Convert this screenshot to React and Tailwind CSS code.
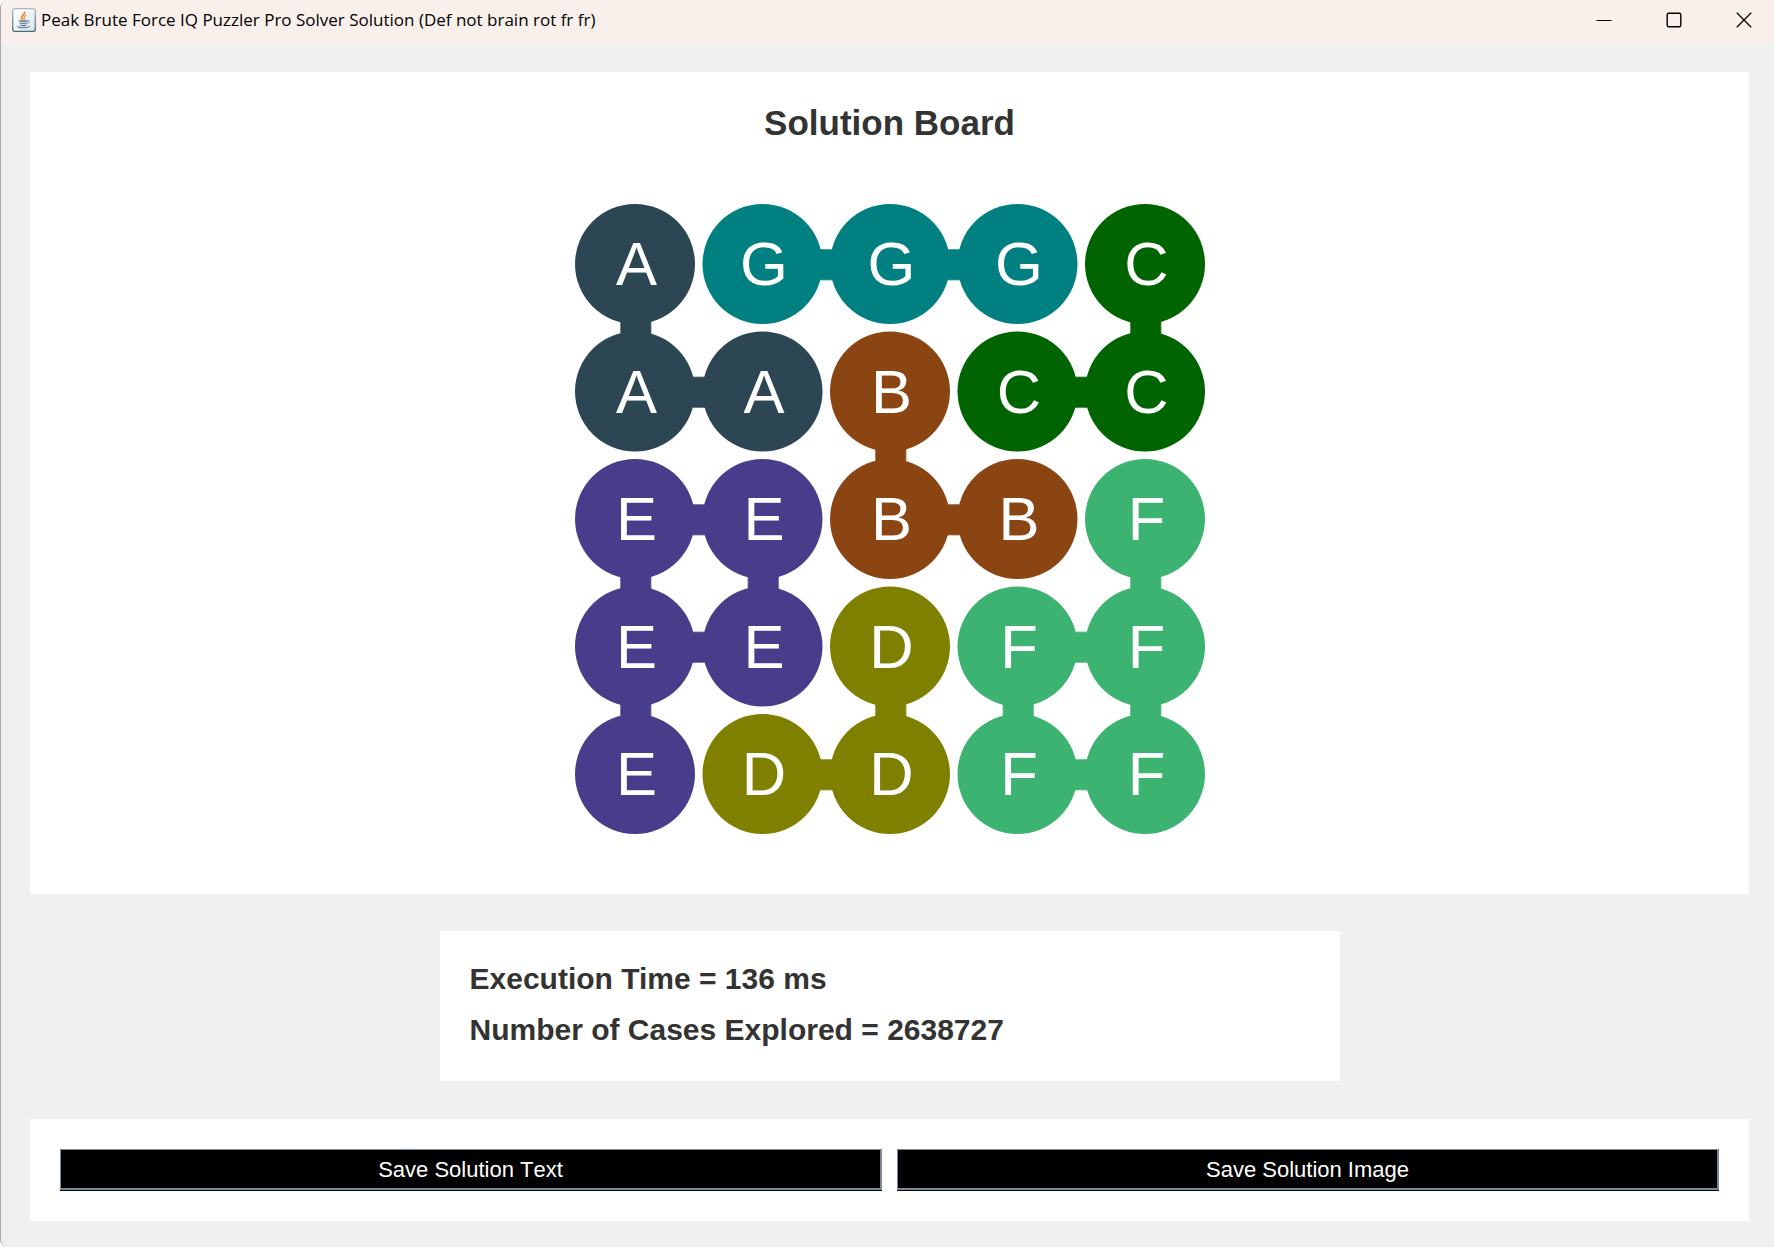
const board = ['AGGGC', 'AABCC', 'EEBBF', 'EEDFF', 'EDDFF']

const colors = {
  A: '#2d4654',
  B: '#8b4513',
  C: '#006400',
  D: '#808000',
  E: '#483d8b',
  F: '#3cb371',
  G: '#008080',
}

const CELL = 80
const STEP = 85

function Connector({ x, y, color }) {
  return (
    <rect x={x} y={y} width={20} height={20} fill={color} stroke={color} strokeOpacity={0.6} />
  )
}

function Board() {
  return (
    <svg viewBox="0 0 420 420" className="w-[630px] max-w-full" role="img" aria-label="Solution board">
      {board.map((row, r) =>
        [...row].map((piece, c) => {
          const x = c * STEP
          const y = r * STEP
          return (
            <g key={`${r}-${c}`}>
              {row[c + 1] === piece && <Connector x={x + 72} y={y + 30.5} color={colors[piece]} />}
              {board[r + 1]?.[c] === piece && <Connector x={x + 30.5} y={y + 72} color={colors[piece]} />}
              <circle cx={x + CELL / 2} cy={y + CELL / 2} r={CELL / 2} fill={colors[piece]} />
            </g>
          )
        })
      )}
      {board.map((row, r) =>
        [...row].map((piece, c) => (
          <text key={`${r}-${c}`} x={c * STEP + 41} y={r * STEP + 54} fontSize="41" fill="#fff" textAnchor="middle">
            {piece}
          </text>
        ))
      )}
    </svg>
  )
}

function JavaIcon() {
  return (
    <svg viewBox="0 0 24 24" className="w-6 h-6" aria-hidden="true">
      <defs>
        <linearGradient id="frame" x1="0" y1="0" x2="0" y2="1">
          <stop offset="0" stopColor="#a9bccb" />
          <stop offset="1" stopColor="#48667c" />
        </linearGradient>
        <linearGradient id="face" x1="0" y1="0" x2="1" y2="1">
          <stop offset="0" stopColor="#ffffff" />
          <stop offset="1" stopColor="#dde5ea" />
        </linearGradient>
      </defs>
      <rect x="0.7" y="0.7" width="22.6" height="22.6" rx="2" fill="url(#face)" stroke="url(#frame)" strokeWidth="1.3" />
      <g fill="none" strokeLinecap="round">
        <path d="M12.6 4.4c.8 2-3.4 2.8-3.1 5 .1 1 1 1.6 1.4 2.5" stroke="#ee8424" strokeWidth="1.7" />
        <path d="M14 7.3c-1.8.9-2.7 1.8-1.7 2.9.5.7.3 1.2-.2 1.7" stroke="#f0934a" strokeWidth="1.3" />
        <path d="M7.3 12.7c2 .8 5.8.8 7.7 0M8 15c1.8.7 4.800.7 6.400 0M8.600 17.1c1.5.6 4 .6 5.300 0" stroke="#5d7f9b" strokeWidth="1.3" />
        <path d="M15.4 12.6c2.5-.6 2.8 1.7.3 2.7" stroke="#5d7f9b" strokeWidth="1" />
        <path d="M6 18.3c-1.2 1.9 10.2 2 11.4 0" stroke="#5d7f9b" strokeWidth="1.2" />
      </g>
    </svg>
  )
}

function TitleBar() {
  return (
    <header className="h-[42px] pl-[11px] flex items-center bg-[#f9f0ec]">
      <div className="flex-1 flex items-center gap-[5px] pb-[3px]">
        <JavaIcon />
        <h1 className="font-['Segoe_UI','Open_Sans',sans-serif] text-[17px] leading-6 text-black">
          Peak Brute Force IQ Puzzler Pro Solver Solution (Def not brain rot fr fr)
        </h1>
      </div>
      <div className="flex self-stretch gap-[10px] pb-[3px]">
        <button aria-label="Minimize" className="w-[60px] flex items-center justify-center">
          <svg viewBox="0 0 16 16" className="w-4 h-4">
            <path d="M0.5 8.5h15" stroke="#000" fill="none" />
          </svg>
        </button>
        <button aria-label="Maximize" className="w-[60px] flex items-center justify-center">
          <svg viewBox="0 0 16 16" className="w-4 h-4">
            <rect x="1.2" y="1.2" width="13.6" height="13.6" rx="1.5" stroke="#000" strokeWidth="1.4" fill="none" />
          </svg>
        </button>
        <button aria-label="Close" className="w-[60px] flex items-center justify-center">
          <svg viewBox="0 0 16 16" className="w-4 h-4">
            <path d="M0.8 0.8l14.4 14.4M15.2 0.8L0.8 15.2" stroke="#000" strokeWidth="1.3" fill="none" />
          </svg>
        </button>
      </div>
    </header>
  )
}

function SaveButton({ children }) {
  return (
    <button className="flex-1 h-[42px] border-b border-black bg-black flex">
      <span className="flex-1 self-stretch flex items-center justify-center pt-0.5 border border-r-2 border-b-2 border-[#7a8a99] text-[22px] leading-6 text-white [font-kerning:none]">
        {children}
      </span>
    </button>
  )
}

export default function App() {
  return (
    <div className="min-h-screen flex flex-col rounded-l-lg border-l border-[#aaaaaa] bg-[#f0f0f0] overflow-hidden font-['Liberation_Sans',Arial,sans-serif] text-[#333333]">
      <TitleBar />
      <main className="flex-1 flex flex-col pt-[30px] pr-[25px] pb-[26px] pl-[29px]">
        <section className="flex-1 flex flex-col items-center bg-white pt-[30px] pb-[60px]">
          <h2 className="text-[35px] leading-[42px] font-bold">Solution Board</h2>
          <div className="flex-1 flex items-end">
            <Board />
          </div>
        </section>

        <section className="w-[900px] max-w-full self-center mt-[37px] mb-[38px] px-[30px] pt-7 pb-8 bg-white text-[30px] leading-[39px] font-bold flex flex-col gap-3">
          <p>Execution Time = 136 ms</p>
          <p>Number of Cases Explored = 2638727</p>
        </section>

        <section className="flex gap-[15px] p-[30px] bg-white">
          <SaveButton>Save Solution Text</SaveButton>
          <SaveButton>Save Solution Image</SaveButton>
        </section>
      </main>
    </div>
  )
}
